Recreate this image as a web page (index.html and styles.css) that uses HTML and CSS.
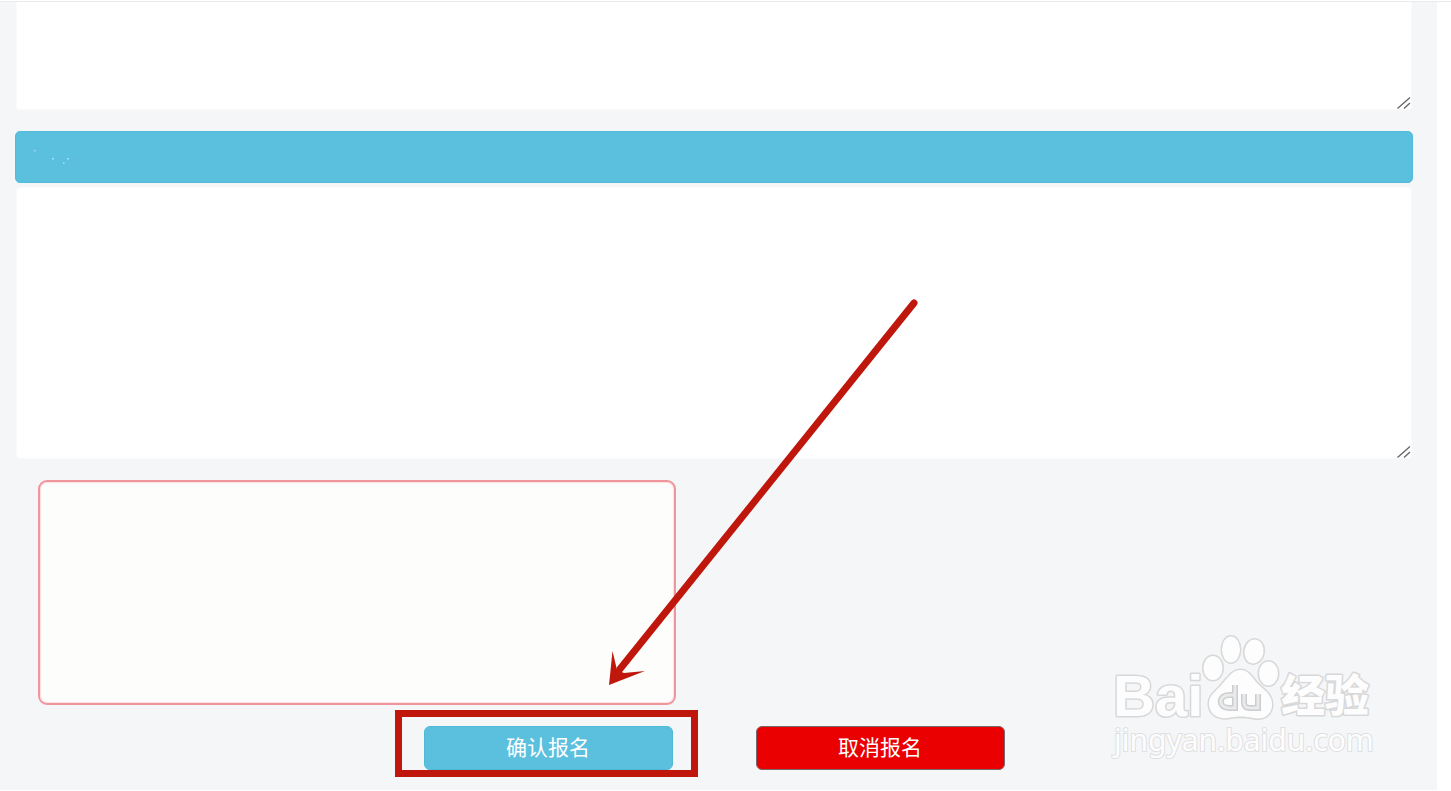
FILE: index.html
```html
<!DOCTYPE html>
<html lang="zh-CN">
<head>
<meta charset="utf-8">
<title>确认报名</title>
<link rel="stylesheet" href="styles.css">
</head>
<body>
<main class="panel">
  <form class="form">
    <div class="field field-first">
      <textarea class="area area-short" aria-label="备注"></textarea>
      <svg class="grip" viewBox="0 0 14 12" aria-hidden="true"><path d="M0.500 11.500 13 0.500M7 11.500 13 6"/></svg>
    </div>
    <div class="section-bar">
      <svg class="specks" viewBox="0 0 40 16" aria-hidden="true"><path d="M0 0h1.500v1.500H0zM18 8h2v1.500h-2zM29 12.500h1.500v1.500H29zM33 8h2v1.500h-2z"/></svg>
    </div>
    <div class="field">
      <textarea class="area area-tall" aria-label="说明"></textarea>
      <svg class="grip" viewBox="0 0 14 12" aria-hidden="true"><path d="M0.500 11.500 13 0.500M7 11.500 13 6"/></svg>
    </div>
    <div class="notice"></div>
    <div class="actions">
      <div class="marked">
        <button class="btn btn-confirm" type="button">确认报名</button>
        <span class="highlight"></span>
      </div>
      <button class="btn btn-cancel" type="button">取消报名</button>
    </div>
  </form>
  <svg class="arrow" viewBox="0 0 320 396" aria-hidden="true">
    <path class="arrow-line" d="M314 13 20 379"/>
    <path class="arrow-head" d="M9 395 12.500 361 17 380 24 383 45 381Z"/>
  </svg>
  <svg class="watermark" viewBox="0 0 270 130" role="img" aria-label="Baidu 经验">
    <g class="mark">
      <text class="mark-bai" x="3" y="83">Bai</text>
      <ellipse cx="103" cy="35" rx="9.500" ry="12"/>
      <ellipse cx="121" cy="16.500" rx="9" ry="13"/>
      <ellipse cx="144" cy="18.500" rx="9.500" ry="12" transform="rotate(10 144 18.500)"/>
      <ellipse cx="158.500" cy="40.500" rx="9.500" ry="12"/>
      <path d="M130.500 37C139 37 142 45 148 51C154 57 163 62 162 73C161 83 153 87 143 85C134 83 128 83 118 85C107 86 100 81 99 72C98 62 107 58 112 51C118 45 122 37 130.500 37Z"/>
      <text class="mark-cn" x="171" y="79">经验</text>
    </g>
    <path class="mark-du-edge" d="M125 52V75H119C108 75 108 62 119 62H125M134 61V69C134 74 136 75 140 75H148V61"/>
    <path class="mark-du" d="M125 52V75H119C108 75 108 62 119 62H125M134 61V69C134 74 136 75 140 75H148V61"/>
    <text class="mark-url" x="4" y="118">jingyan.baidu.com</text>
  </svg>
</main>
</body>
</html>
```
FILE: styles.css
```css
* {
  box-sizing: border-box;
}

body {
  margin: 0;
  background: #fff;
  font-family: "Noto Sans CJK SC", sans-serif;
}

.panel {
  position: relative;
  margin: 1px 14px 0 0;
  padding: 0 24px 20px 15px;
  background: #f4f6f8;
}

.panel::before {
  content: "";
  position: absolute;
  top: 0;
  left: 0;
  width: 100vw;
  height: 1px;
  background: #e9ebed;
}

.field {
  position: relative;
  padding: 0 1px;
}

.field-first {
  padding-top: 1px;
}

.area {
  display: block;
  width: 100%;
  border: 1px solid #fafafa;
  border-radius: 4px;
  background: #fff;
  resize: none;
  outline: 0;
}

.area-short {
  height: 108px;
  border-top: 0;
  border-top-left-radius: 0;
  border-top-right-radius: 0;
}

.area-tall {
  height: 272px;
}

.grip {
  position: absolute;
  right: 2px;
  bottom: 1px;
  width: 14px;
  height: 12px;
  fill: none;
  stroke: #666;
  stroke-width: 1.3;
}

.section-bar {
  height: 52px;
  margin: 21px 0 4px;
  padding: 18px;
  border: 1px solid #52bbdb;
  border-radius: 5px;
  background: #5bc0de;
}

.specks {
  display: block;
  width: 40px;
  height: 16px;
  fill: #a4e2ee;
}

.notice {
  width: 638px;
  height: 225px;
  margin: 21px 0 0 23px;
  border: 2px solid #f0959b;
  border-radius: 9px;
  background: #fdfdfc;
  box-shadow: inset 0 0 1px 1px #fbdfe0;
}

.actions {
  display: flex;
  justify-content: center;
  gap: 83px;
  margin-top: 21px;
}

.marked {
  position: relative;
}

.btn {
  display: block;
  width: 249px;
  height: 44px;
  padding: 0 0 4px;
  border-radius: 6px;
  color: #fff;
  font-family: inherit;
  font-size: 21px;
  line-height: 38px;
}

.btn-confirm {
  border: 1px solid #4fb9da;
  background: #5bc0de;
}

.btn-cancel {
  border: 1px solid #76686b;
  background: #ea0000;
}

.highlight {
  position: absolute;
  inset: -16px -25px -7px -29px;
  border: 7px solid #bf170b;
  pointer-events: none;
}

.arrow {
  position: absolute;
  top: 289px;
  left: 600px;
  width: 320px;
  height: 396px;
  pointer-events: none;
}

.arrow-line {
  fill: none;
  stroke: #bf170b;
  stroke-width: 7;
  stroke-linecap: round;
}

.arrow-head {
  fill: #bf170b;
}

.watermark {
  position: absolute;
  right: 57px;
  bottom: 27px;
  width: 270px;
  height: 130px;
  overflow: visible;
  pointer-events: none;
}

.mark {
  fill: #fdfdfd;
  stroke: #d7d8d9;
  stroke-width: 3;
  stroke-linejoin: round;
  paint-order: stroke;
}

.mark-du-edge {
  fill: none;
  stroke: #cccdce;
  stroke-width: 6;
}

.mark-du {
  fill: none;
  stroke: #e9eaeb;
  stroke-width: 3;
}

.mark-bai {
  font: bold 58px "Liberation Sans", sans-serif;
}

.mark-cn {
  font: 900 44px "Noto Sans CJK SC", sans-serif;
}

.mark-url {
  font: 30px "Noto Sans", sans-serif;
  fill: #fdfdfd;
  stroke: #dfe0e1;
  stroke-width: 2;
  paint-order: stroke;
}
```
